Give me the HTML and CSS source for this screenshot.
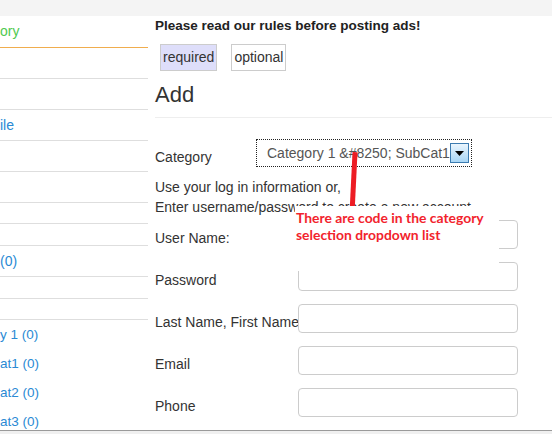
FILE: index.html
```html
<!DOCTYPE html>
<html>
<head>
<meta charset="utf-8">
<link rel="stylesheet" href="styles.css">
</head>
<body>
<div class="topbar"></div>
<div class="page">
  <aside class="side">
    <div class="row first"><span class="green">ory</span></div>
    <div class="row"></div>
    <div class="row"></div>
    <div class="row"><span class="link">ile</span></div>
    <div class="row"></div>
    <div class="row"></div>
    <div class="row short20"></div>
    <div class="row short21"></div>
    <div class="row"><span class="link">(0)</span></div>
    <div class="row short21"></div>
    <div class="row short20"></div>
    <ul class="cats">
      <li>y 1 (0)</li>
      <li>at1 (0)</li>
      <li>at2 (0)</li>
      <li>at3 (0)</li>
    </ul>
  </aside>
  <main class="main">
    <div class="notice">Please read our rules before posting ads!</div>
    <div class="legend">
      <span class="tag req">required</span>
      <span class="tag">optional</span>
    </div>
    <h1 class="title">Add</h1>
    <div class="cat-row">
      <label class="cat-label">Category</label>
      <div class="fake-select">
        <span class="sel-text">Category 1 &amp;#8250; SubCat1</span>
        <span class="sel-btn"><svg width="9" height="5" viewBox="0 0 9 5"><path d="M0 0H9L4.5 5Z" fill="#000"/></svg></span>
      </div>
    </div>
    <div class="info">Use your log in information or,<br>Enter username/password to create a new account</div>
    <div class="frow"><label class="flabel">User Name:</label><input class="finput" type="text"></div>
    <div class="frow"><label class="flabel">Password</label><input class="finput" type="password"></div>
    <div class="frow"><label class="flabel">Last Name, First Name</label><input class="finput" type="text"></div>
    <div class="frow"><label class="flabel">Email</label><input class="finput" type="text"></div>
    <div class="frow"><label class="flabel">Phone</label><input class="finput" type="text"></div>
    <div class="frow"><label class="flabel"></label><input class="finput" type="text"></div>
  </main>
</div>
<div class="redline"></div>
<div class="note">There are code in the category<br>selection dropdown list</div>
<div class="frame-bottom"></div>
</body>
</html>
```
FILE: styles.css
```css
html, body {
  margin: 0;
  padding: 0;
  overflow: hidden;
  background: #fff;
  font-family: "Liberation Sans", Arial, sans-serif;
  color: #333;
}
.topbar {
  height: 16px;
  background: #f4f4f4;
}
.page {
  display: flex;
  align-items: flex-start;
}
.side {
  width: 148px;
  flex: none;
  font-size: 14px;
}
.row {
  height: 30px;
  border-bottom: 1px solid #dedede;
  display: flex;
  align-items: center;
  line-height: 20px;
}
.row.first {
  box-sizing: border-box;
  height: 32px;
  padding-bottom: 1px;
  border-bottom-color: #f0ad4e;
}
.row.short20 { height: 20px; }
.row.short21 { height: 21px; }
.green { color: #4fc94f; }
.link { color: #2a8ad4; }
.cats {
  list-style: none;
  margin: 0;
  padding: 0;
  font-size: 13.5px;
  color: #2a8ad4;
}
.cats li {
  height: 29px;
  line-height: 29px;
}
.main {
  margin-left: 7px;
  flex: 1;
  font-size: 14px;
}
.notice {
  padding-top: 2px;
  font-size: 13.5px;
  line-height: 16px;
  font-weight: bold;
  color: #222;
}
.legend {
  margin-top: 10px;
  margin-left: 5px;
  display: flex;
  gap: 14px;
}
.tag {
  height: 27px;
  box-sizing: border-box;
  border: 1px solid #ccc;
  line-height: 25px;
  padding: 0 2px;
  color: #333;
}
.tag.req {
  background: #dedefa;
}
.title {
  margin: 11px 0 0;
  font-size: 22px;
  line-height: 26px;
  font-weight: normal;
  color: #333;
  padding-bottom: 9px;
  border-bottom: 1px solid #eee;
}
.cat-row {
  margin-top: 21px;
  display: flex;
  align-items: flex-start;
}
.cat-label {
  width: 101px;
  padding-top: 8px;
  line-height: 20px;
}
.fake-select {
  width: 216px;
  height: 28px;
  box-sizing: border-box;
  border: 1px dotted #222;
  display: flex;
  align-items: center;
  padding-left: 10px;
  padding-right: 2px;
  overflow: hidden;
}
.sel-text {
  flex: 1;
  white-space: nowrap;
  overflow: hidden;
  color: #555;
  font-size: 14px;
}
.sel-btn {
  width: 19px;
  height: 20px;
  box-sizing: border-box;
  border: 1px solid #3c7bb0;
  background: linear-gradient(#eaf5fd, #a8d6f6);
  display: flex;
  align-items: center;
  justify-content: center;
  flex: none;
}
.info {
  margin-top: 10px;
  line-height: 20px;
}
.frow {
  display: flex;
  align-items: flex-start;
  margin-bottom: 13px;
}
.info + .frow {
  margin-top: 3px;
}
.flabel {
  width: 143px;
  padding-top: 8px;
  line-height: 20px;
  white-space: nowrap;
}
.finput {
  width: 220px;
  height: 29px;
  box-sizing: border-box;
  border: 1px solid #ccc;
  border-radius: 4px;
  margin: 0;
  padding: 0 8px;
  font: inherit;
}
.redline {
  position: absolute;
  left: 351px;
  top: 152px;
  width: 5px;
  height: 62px;
  background: #ed1c24;
  transform: rotate(2.8deg);
}
.note {
  position: absolute;
  z-index: 2;
  left: 295px;
  top: 206px;
  width: 204px;
  height: 65px;
  box-sizing: border-box;
  padding: 3px 0 0 1px;
  background: #fff;
  color: #f2232d;
  font-family: Lato, "Liberation Sans", sans-serif;
  font-weight: bold;
  font-size: 13.9px;
  line-height: 17px;
  white-space: nowrap;
}
.frame-bottom {
  position: fixed;
  z-index: 3;
  left: 0;
  right: 0;
  bottom: 0;
  height: 3px;
  border-top: 1px solid #9a9a9a;
  background: #f0f0f0;
}
```
